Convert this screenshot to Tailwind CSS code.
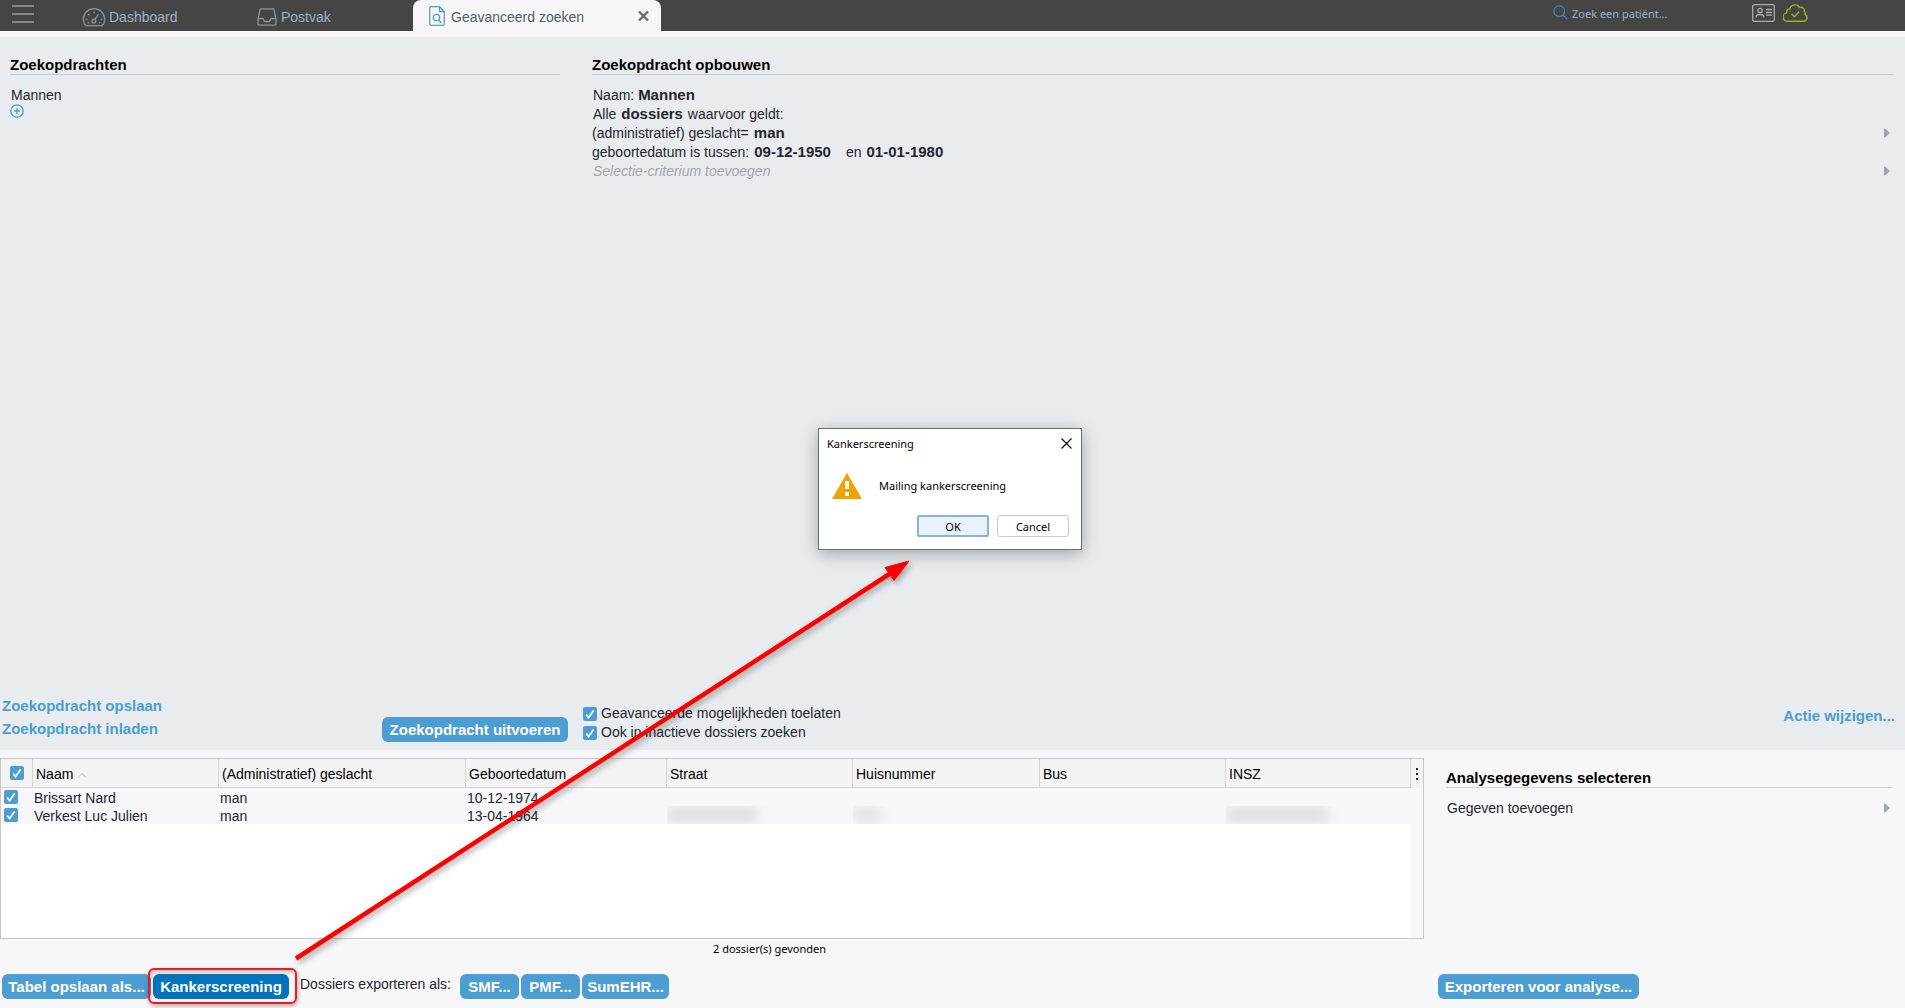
<!DOCTYPE html>
<html lang="nl">
<head>
<meta charset="utf-8">
<title>Geavanceerd zoeken</title>
<script src="https://cdn.jsdelivr.net/npm/@tailwindcss/browser@4"></script>
</head>
<body class="bg-[#f7f7fa] font-['Liberation_Sans',Arial,sans-serif] text-[14px] leading-[19px] text-[#24242e]">
<svg class="hidden">
  <symbol id="tick" viewBox="0 0 14 14"><path d="M3.2 7.6l2.4 2.9 5-7" fill="none" stroke="#fff" stroke-width="1.8"/></symbol>
  <symbol id="caret" viewBox="0 0 6 10"><path d="M0 .5h1l5 4.500-5 4.500H0z" fill="#9da5ad"/></symbol>
</svg>
<div class="relative flex min-h-screen flex-col overflow-hidden">

  <!-- Top bar -->
  <header class="flex h-[31px] items-start bg-[#454545] text-[#a3b1bf]">
    <button type="button" aria-label="Menu" class="ml-3 mt-[5px] w-[22px]">
      <svg width="22" height="19" fill="none" stroke="#9a9fa5" stroke-width="1.500"><path d="M0 1h22M0 9h22M0 17h22"/></svg>
    </button>
    <nav class="flex items-start">
      <a href="#" class="ml-[48px] flex h-[31px] w-[175px] items-center gap-[3px] pt-[4px]">
        <svg class="mb-[2px]" width="24" height="20" viewBox="0 0 24 20" fill="none" stroke="#8d9399" stroke-width="1.300"><path d="M3.800 18.600h16.400c1.500-1.300 2.500-3.300 2.500-6.300a10.700 10.700 0 0 0-21.400 0c0 3 1 5 2.500 6.300z"/><circle cx="11.800" cy="14" r="1.900"/><path d="M13 12.400l3.500-5.400"/><path d="M3.800 12.500h1.700M18.600 12.500h1.700M6.200 7.100l1.200 1.200M11.200 5.500h1.600M5.800 16l1.200-.6M17 15.400l1.200.6" stroke-width="1.500"/></svg>
        Dashboard
      </a>
      <a href="#" class="flex h-[31px] w-[156px] items-center gap-[4px] pt-[4px]">
        <svg class="mb-[2px]" width="20" height="18" viewBox="0 0 20 18" fill="none" stroke="#8d9399" stroke-width="1.300"><path d="M1 10.500L3.300.8h13.400L19 10.500v5.200a1.500 1.500 0 0 1-1.500 1.500h-15A1.500 1.500 0 0 1 1 15.700zM1 10.500h5l1.500 3h5l1.500-3h5"/></svg>
        Postvak
      </a>
      <a href="#" class="flex h-[31px] w-[248px] items-center rounded-t-[8px] bg-[#f7f7fa] pl-4 pr-3 pt-[4px] text-[#525c66]">
        <svg class="mb-[3px] mr-[6px]" width="16" height="20" viewBox="0 0 16 20" fill="none" stroke="#4c9dd1" stroke-width="1.300"><path d="M10.500.7H2.200A1.500 1.500 0 0 0 .7 2.200v15.600a1.500 1.500 0 0 0 1.500 1.500h11.600a1.500 1.500 0 0 0 1.500-1.500V5.500zM10.500.7v4.800h4.800"/><circle cx="7.500" cy="11.500" r="3.200"/><path d="M9.800 14l2.600 3"/></svg>
        <span class="flex-1">Geavanceerd zoeken</span>
        <svg class="mb-[3px]" width="11" height="10" viewBox="0 0 11 10" stroke="#6b6f73" stroke-width="2.400"><path d="M1 .5l9 9M10 .5l-9 9"/></svg>
      </a>
    </nav>
    <div class="ml-auto mr-[97px] flex items-start pt-[4px]">
      <label class="flex items-center gap-[4px]">
        <svg class="mb-[2px]" width="15" height="15" viewBox="0 0 15 15" fill="none" stroke="#4086b5" stroke-width="1.200"><circle cx="6.200" cy="6.200" r="5.400"/><path d="M10.200 10.200l4 4"/></svg>
        <input type="text" aria-label="Zoek een patiënt" placeholder="Zoek een patiënt..." class="w-[180px] bg-transparent font-['Noto_Sans',sans-serif] text-[11px] outline-none placeholder:text-[#a3b1bf]">
      </label>
      <svg width="23" height="18" viewBox="0 0 23 18" fill="none" stroke="#a9abad" stroke-width="1.300"><rect x=".7" y=".7" width="21.600" height="16.600" rx="1.500"/><circle cx="8" cy="6.500" r="2.200"/><path d="M4 13.500c0-4 8-4 8 0M14 5.500h6M14 8.500h6M14 11.200h6"/></svg>
      <svg class="ml-2" width="25" height="18" viewBox="0 0 25 18" fill="none" stroke="#93b71b" stroke-width="1.400"><path d="M5 17.200a4.200 4.200 0 0 1-1.300-8.300C3.200 6.500 4.800 5 6.800 5 8 .2 14.500-.6 16.500 3.600c2.700-1 5.300.8 4.800 3.900 1.200.8 1.200 2 .8 3 3 1.500 2.300 6.700-1.600 6.700z"/><path d="M8.500 10l3 2.800 4.500-5"/></svg>
    </div>
  </header>

  <!-- Query builder -->
  <main class="mt-[6px] flex flex-1 flex-col bg-[#e8ecef]">
    <div class="flex gap-[32px] pl-[10px] pr-3 pt-[18px]">
      <section class="w-[550px]">
        <h2 class="border-b border-[#c8ccd0] pt-px text-[15px] leading-[18px] font-bold text-black">Zoekopdrachten</h2>
        <p class="mt-[11px] pl-px">Mannen</p>
        <button type="button" aria-label="Zoekopdracht toevoegen" class="block">
          <svg class="-mt-px block" width="14" height="14" viewBox="0 0 14 14" fill="none" stroke="#4c9dd1" stroke-width="1.300"><circle cx="7" cy="7" r="6.200"/><path d="M7 4v6M4 7h6"/></svg>
        </button>
      </section>
      <section class="flex-1">
        <h2 class="border-b border-[#c8ccd0] pt-px text-[15px] leading-[18px] font-bold text-black">Zoekopdracht opbouwen</h2>
        <div class="mt-[11px] pr-[3px]">
          <p class="h-[19px] pl-px">Naam: <b class="text-[15px] leading-none">Mannen</b></p>
          <p class="h-[19px] pl-px">Alle <b class="mx-px text-[15px] leading-none">dossiers</b> waarvoor geldt:</p>
          <p class="flex h-[19px] items-baseline">(administratief) geslacht=<b class="ml-[5px] text-[15px] leading-none">man</b><svg class="ml-auto" width="6" height="10"><use href="#caret"/></svg></p>
          <p class="flex h-[19px] items-baseline">geboortedatum is tussen:<b class="ml-[5px] mr-[15px] text-[15px] leading-none">09-12-1950</b>en<b class="ml-[5px] text-[15px] leading-none">01-01-1980</b></p>
          <p class="flex h-[19px] items-baseline pl-px italic text-[#a0a7af]">Selectie-criterium toevoegen<svg class="ml-auto" width="6" height="10"><use href="#caret"/></svg></p>
        </div>
      </section>
    </div>

    <div class="mt-auto flex items-end pb-2 pl-[2px] pr-[10px]">
      <div class="flex w-[380px] flex-col items-start gap-[4px] pb-1 text-[15px] font-bold text-[#4c9dd1]">
        <a href="#">Zoekopdracht opslaan</a>
        <a href="#">Zoekopdracht inladen</a>
      </div>
      <button type="button" class="h-[25px] w-[186px] rounded-[6px] bg-[#4c9dd1] text-[15px] font-bold text-white">Zoekopdracht uitvoeren</button>
      <div class="ml-[15px]">
        <label class="flex items-center gap-[4px]"><span class="relative"><input type="checkbox" checked class="block size-[14px] appearance-none rounded-[2px] bg-[#4c9dd1]"><svg class="pointer-events-none absolute inset-0" width="14" height="14"><use href="#tick"/></svg></span>Geavanceerde mogelijkheden toelaten</label>
        <label class="flex items-center gap-[4px]"><span class="relative"><input type="checkbox" checked class="block size-[14px] appearance-none rounded-[2px] bg-[#4c9dd1]"><svg class="pointer-events-none absolute inset-0" width="14" height="14"><use href="#tick"/></svg></span>Ook in inactieve dossiers zoeken</label>
      </div>
      <a href="#" class="mb-[17px] ml-auto text-[15px] font-bold text-[#4c9dd1]">Actie wijzigen...</a>
    </div>
  </main>

  <!-- Results -->
  <div class="flex pt-2">
    <section class="w-[1424px]">
      <div class="flex h-[181px] border border-[#c8c8cb] bg-white">
        <div class="flex-1">
          <table class="w-full table-fixed border-separate border-spacing-0 text-left">
            <colgroup><col class="w-[32px]"><col class="w-[186px]"><col class="w-[247px]"><col class="w-[201px]"><col class="w-[186px]"><col class="w-[187px]"><col class="w-[186px]"><col></colgroup>
            <thead>
              <tr class="h-[29px] bg-[#f3f3f3] text-black">
                <th class="border-b border-r border-[#d5d5d8] pl-[9px] font-normal"><span class="relative block w-[14px]"><input type="checkbox" checked aria-label="Alles selecteren" class="block size-[14px] appearance-none rounded-[2px] bg-[#4c9dd1]"><svg class="pointer-events-none absolute inset-0" width="14" height="14"><use href="#tick"/></svg></span></th>
                <th class="border-b border-r border-[#d5d5d8] pl-[3px] pt-[2px] font-normal">Naam <svg class="inline" width="10" height="6" fill="none" stroke="#b5b5b8"><path d="M1 5.500l4-4 4 4"/></svg></th>
                <th class="border-b border-r border-[#d5d5d8] pl-[3px] pt-[2px] font-normal">(Administratief) geslacht</th>
                <th class="border-b border-r border-[#d5d5d8] pl-[3px] pt-[2px] font-normal">Geboortedatum</th>
                <th class="border-b border-r border-[#d5d5d8] pl-[3px] pt-[2px] font-normal">Straat</th>
                <th class="border-b border-r border-[#d5d5d8] pl-[3px] pt-[2px] font-normal">Huisnummer</th>
                <th class="border-b border-r border-[#d5d5d8] pl-[3px] pt-[2px] font-normal">Bus</th>
                <th class="border-b border-r border-[#d5d5d8] pl-[3px] pt-[2px] font-normal">INSZ</th>
              </tr>
            </thead>
            <tbody class="bg-[#f7f7fa] leading-[16px]">
              <tr>
                <td class="pl-[3px]"><span class="relative block w-[14px]"><input type="checkbox" checked aria-label="Brissart Nard" class="block size-[14px] appearance-none rounded-[2px] bg-[#4c9dd1]"><svg class="pointer-events-none absolute inset-0" width="14" height="14"><use href="#tick"/></svg></span></td>
                <td class="pl-px pt-[2px]">Brissart Nard</td><td class="pl-px pt-[2px]">man</td><td class="pl-px pt-[2px]">10-12-1974</td><td></td><td></td><td></td><td></td>
              </tr>
              <tr>
                <td class="pl-[3px]"><span class="relative block w-[14px]"><input type="checkbox" checked aria-label="Verkest Luc Julien" class="block size-[14px] appearance-none rounded-[2px] bg-[#4c9dd1]"><svg class="pointer-events-none absolute inset-0" width="14" height="14"><use href="#tick"/></svg></span></td>
                <td class="pl-px pt-[2px]">Verkest Luc Julien</td><td class="pl-px pt-[2px]">man</td><td class="pl-px pt-[2px]">13-04-1964</td>
                <td><div class="h-[18px] overflow-hidden"><div class="h-[18px] w-[90px] bg-black/9 blur-[6px]"></div></div></td>
                <td><div class="h-[18px] overflow-hidden"><div class="h-[18px] w-[28px] bg-black/7 blur-[6px]"></div></div></td>
                <td></td>
                <td><div class="h-[18px] overflow-hidden"><div class="h-[18px] w-[102px] bg-black/9 blur-[6px]"></div></div></td>
              </tr>
            </tbody>
          </table>
        </div>
        <div class="w-[12px] bg-[#f7f7fa]">
          <button type="button" aria-label="Kolommen" class="flex h-[29px] w-full items-center justify-center bg-[#f3f3f3]"><svg width="2" height="12" fill="#222"><path d="M0 0h2v2H0zM0 5h2v2H0zM0 10h2v2H0z"/></svg></button>
        </div>
      </div>
      <p class="h-[35px] pl-[115px] text-center font-['Noto_Sans',sans-serif] text-[11px] text-black">2 dossier(s) gevonden</p>
      <div class="flex items-center gap-[2px] pb-[9px] pl-[2px]">
        <button type="button" class="h-[25px] w-[149px] rounded-[6px] bg-[#4c9dd1] text-[15px] font-bold text-white">Tabel opslaan als...</button>
        <div class="relative">
          <button type="button" class="block h-[25px] w-[136px] rounded-[6px] bg-[#0373bb] text-[15px] font-bold text-white">Kankerscreening</button>
          <div class="pointer-events-none absolute -bottom-[5px] -left-[5px] -right-[8px] -top-[6px] rounded-[6px] border-2 border-[#ef1720] shadow-[1px_2px_4px_rgba(0,0,0,0.3),inset_1px_2px_4px_rgba(0,0,0,0.25)]"></div>
        </div>
        <span class="mb-[5px] ml-[9px] w-[158px]">Dossiers exporteren als:</span>
        <button type="button" class="h-[25px] w-[59px] rounded-[6px] bg-[#4c9dd1] text-[15px] font-bold text-white">SMF...</button>
        <button type="button" class="h-[25px] w-[59px] rounded-[6px] bg-[#4c9dd1] text-[15px] font-bold text-white">PMF...</button>
        <button type="button" class="h-[25px] w-[87px] rounded-[6px] bg-[#4c9dd1] text-[15px] font-bold text-white">SumEHR...</button>
      </div>
    </section>
    <section class="flex flex-1 flex-col pb-[9px] pl-[14px] pr-3 pt-[10px]">
      <h2 class="ml-2 border-b border-[#d5d5d8] pt-px text-[15px] leading-[18px] font-bold text-black">Analysegegevens selecteren</h2>
      <p class="ml-[9px] mt-[11px] flex items-baseline pr-[3px]">Gegeven toevoegen<svg class="ml-auto" width="6" height="10"><use href="#caret"/></svg></p>
      <button type="button" class="mt-auto h-[25px] w-[201px] rounded-[6px] bg-[#4c9dd1] text-[15px] font-bold text-white">Exporteren voor analyse...</button>
    </section>
  </div>

  <!-- Arrow from the button to the dialog -->
  <svg class="pointer-events-none absolute bottom-0 left-0 drop-shadow-[2px_3px_3px_rgba(0,0,0,0.35)]" width="920" height="460" viewBox="0 548 920 460"><path d="M296 958.500L891 573" stroke="#f00" stroke-width="4.500"/><path d="M909 561l-24 6.500 9 13z" fill="#f00" stroke="#f00"/></svg>

  <!-- Dialog -->
  <div class="pointer-events-none absolute inset-0 flex items-center justify-center pb-[30px] pr-[5px]">
    <div role="dialog" aria-labelledby="dialog-title" class="pointer-events-auto flex h-[122px] w-[264px] flex-col border border-[#6b6e70] bg-white font-['Noto_Sans',sans-serif] text-[11px] text-black shadow-[0_4px_16px_rgba(0,0,0,0.3)]">
      <div class="flex items-center justify-between pl-2 pr-[9px] pt-[5px]">
        <h3 id="dialog-title">Kankerscreening</h3>
        <button type="button" aria-label="Sluiten"><svg width="11" height="11" stroke="#000" stroke-width="1.100"><path d="M.5.5l10 10M10.500.5l-10 10"/></svg></button>
      </div>
      <div class="mt-5 flex items-center gap-[17px] pl-[13px]">
        <svg width="30" height="26" viewBox="0 0 30 26"><path d="M15 0l15 26H0z" fill="#f0a202"/><path d="M13 8h4v8h-4zM13 19h4v4h-4z" fill="#fff"/></svg>
        <p class="pb-[2px]">Mailing kankerscreening</p>
      </div>
      <div class="mb-3 mr-3 mt-auto flex justify-end gap-2">
        <button type="button" class="h-[22px] w-[72px] rounded-[2px] border-2 border-[#8ab0d8] bg-[#e9f1fa]">OK</button>
        <button type="button" class="h-[22px] w-[72px] rounded-[3px] border border-[#cbcbcb] bg-white">Cancel</button>
      </div>
    </div>
  </div>
</div>
</body>
</html>
